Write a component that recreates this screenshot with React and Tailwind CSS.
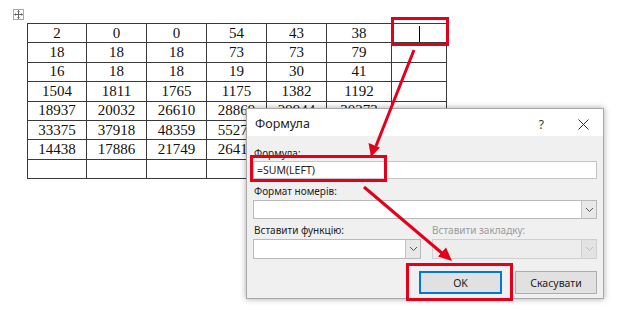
import React from 'react';

const rows = [
  ['2', '0', '0', '54', '43', '38', ''],
  ['18', '18', '18', '73', '73', '79', ''],
  ['16', '18', '18', '19', '30', '41', ''],
  ['1504', '1811', '1765', '1175', '1382', '1192', ''],
  ['18937', '20032', '26610', '28869', '29944', '30273', ''],
  ['33375', '37918', '48359', '55276', '60344', '63479', ''],
  ['14438', '17886', '21749', '26410', '28745', '31066', ''],
  ['', '', '', '', '', '', ''],
];

const widths = ['w-[59px]', 'w-[60px]', 'w-[60px]', 'w-[60px]', 'w-[60px]', 'w-[65px]', 'w-[55px]'];

function Chevron({ disabled }) {
  return (
    <svg width="9" height="6" viewBox="0 0 9 6">
      <path d="M1 1 L4.5 4.5 L8 1" fill="none" stroke={disabled ? '#bdbdbd' : '#555'} strokeWidth="1" />
    </svg>
  );
}

function SelectBox({ className, disabled }) {
  return (
    <div className={`flex border ${disabled ? 'border-[#cfcfcf] bg-[#ededed]' : 'border-[#b9b9b9] bg-white'} ${className}`}>
      <div className="flex-1" />
      <div className={`w-[15px] flex items-center justify-center border-l ${disabled ? 'border-[#cfcfcf] bg-[#e3e3e3]' : 'border-[#c4c4c4] bg-[#e8e8e8]'}`}>
        <Chevron disabled={disabled} />
      </div>
    </div>
  );
}

export default function App() {
  return (
    <div className="relative w-[622px] h-[310px] bg-white overflow-hidden">
      {/* table move handle */}
      <div className="absolute left-[13px] top-[9px] w-[11px] h-[11px] border border-[#a8a8a8] bg-white flex items-center justify-center">
        <svg width="9" height="9" viewBox="0 0 9 9">
          <path d="M4.5 0.5 V8.5 M0.5 4.5 H8.5" stroke="#666" strokeWidth="1" />
          <path d="M4.5 0 L3 1.8 H6 Z M4.5 9 L3 7.2 H6 Z M0 4.5 L1.8 3 V6 Z M9 4.5 L7.2 3 V6 Z" fill="#666" />
        </svg>
      </div>

      <div className="pl-[27px] pt-[23px]">
        <table className="border-collapse table-fixed" style={{ fontFamily: '"Liberation Serif", serif' }}>
          <tbody>
            {rows.map((r, i) => (
              <tr key={i} className="h-[19.4px]">
                {r.map((v, j) => (
                  <td
                    key={j}
                    className={`${widths[j]} border border-[#3a3a3a] p-0 text-center text-[15px] leading-[17px] text-[#111] relative`}
                  >
                    {v}
                    {i === 0 && j === 6 && (
                      <span className="absolute left-[27px] top-[2px] w-px h-[16px] bg-black" />
                    )}
                  </td>
                ))}
              </tr>
            ))}
          </tbody>
        </table>
      </div>

      {/* Formula dialog */}
      <div
        className="absolute left-[246px] top-[108px] w-[358px] h-[191px] border border-[#a9a9a9] bg-[#f0f0f0] shadow-[0_0_6px_rgba(0,0,0,0.35)] flex flex-col"
        style={{ fontFamily: '"Noto Sans", "Open Sans", sans-serif' }}
      >
        <div className="h-[27px] bg-white flex items-center pl-[8px] pr-[14px] pt-[4px]">
          <span className="text-[12.5px] text-[#222] flex-1">Формула</span>
          <span className="text-[12px] text-[#333] mr-[34px]">?</span>
          <svg width="11" height="11" viewBox="0 0 11 11">
            <path d="M0.5 0.5 L10.5 10.5 M10.5 0.5 L0.5 10.5" stroke="#333" strokeWidth="1" />
          </svg>
        </div>
        <div className="flex flex-col px-[6px] pt-[10px] text-[10px] leading-[14px] text-[#222]">
          <div className="pl-[1px]">Формула:</div>
          <div className="mt-[1px] h-[18px] border border-[#c4c4c4] bg-white flex items-center px-[3px] text-[10.5px]">
            =SUM(LEFT)
          </div>
          <div className="mt-[5px] pl-[1px]">Формат номерів:</div>
          <SelectBox className="mt-[2px] h-[19px]" />
          <div className="mt-[4px] flex">
            <div className="w-[168px] pl-[1px]">Вставити функцію:</div>
            <div className="ml-[11px] text-[#9a9a9a]">Вставити закладку:</div>
          </div>
          <div className="mt-[2px] flex">
            <SelectBox className="w-[168px] h-[20px]" />
            <SelectBox className="ml-[11px] flex-1 h-[20px]" disabled />
          </div>
          <div className="mt-[12px] flex justify-end gap-[13px]">
            <div className="w-[83px] h-[23px] border-2 border-[#0078d7] bg-[#e1e1e1] flex items-center justify-center text-[10.5px]">
              OK
            </div>
            <div className="w-[82px] h-[23px] border border-[#adadad] bg-[#e1e1e1] flex items-center justify-center text-[10.5px]">
              Скасувати
            </div>
          </div>
        </div>
      </div>

      {/* red highlight boxes */}
      <div className="absolute left-[391px] top-[17px] w-[58px] h-[29px] border-[3px] border-[#e3001b]" />
      <div className="absolute left-[250px] top-[155px] w-[137px] h-[27px] border-[3px] border-[#e3001b]" />
      <div className="absolute left-[406px] top-[263px] w-[107px] h-[38px] border-[3px] border-[#e3001b]" />

      {/* arrows */}
      <svg className="absolute inset-0 pointer-events-none" width="622" height="310" viewBox="0 0 622 310">
        <line x1="414" y1="50" x2="376" y2="146" stroke="#e3001b" strokeWidth="3" />
        <path d="M371 157 L368.5 143 L380 147.5 Z" fill="#e3001b" />
        <line x1="364" y1="187" x2="443" y2="254" stroke="#e3001b" strokeWidth="3" />
        <path d="M452 261 L438 256.5 L446 247.5 Z" fill="#e3001b" />
      </svg>
    </div>
  );
}
